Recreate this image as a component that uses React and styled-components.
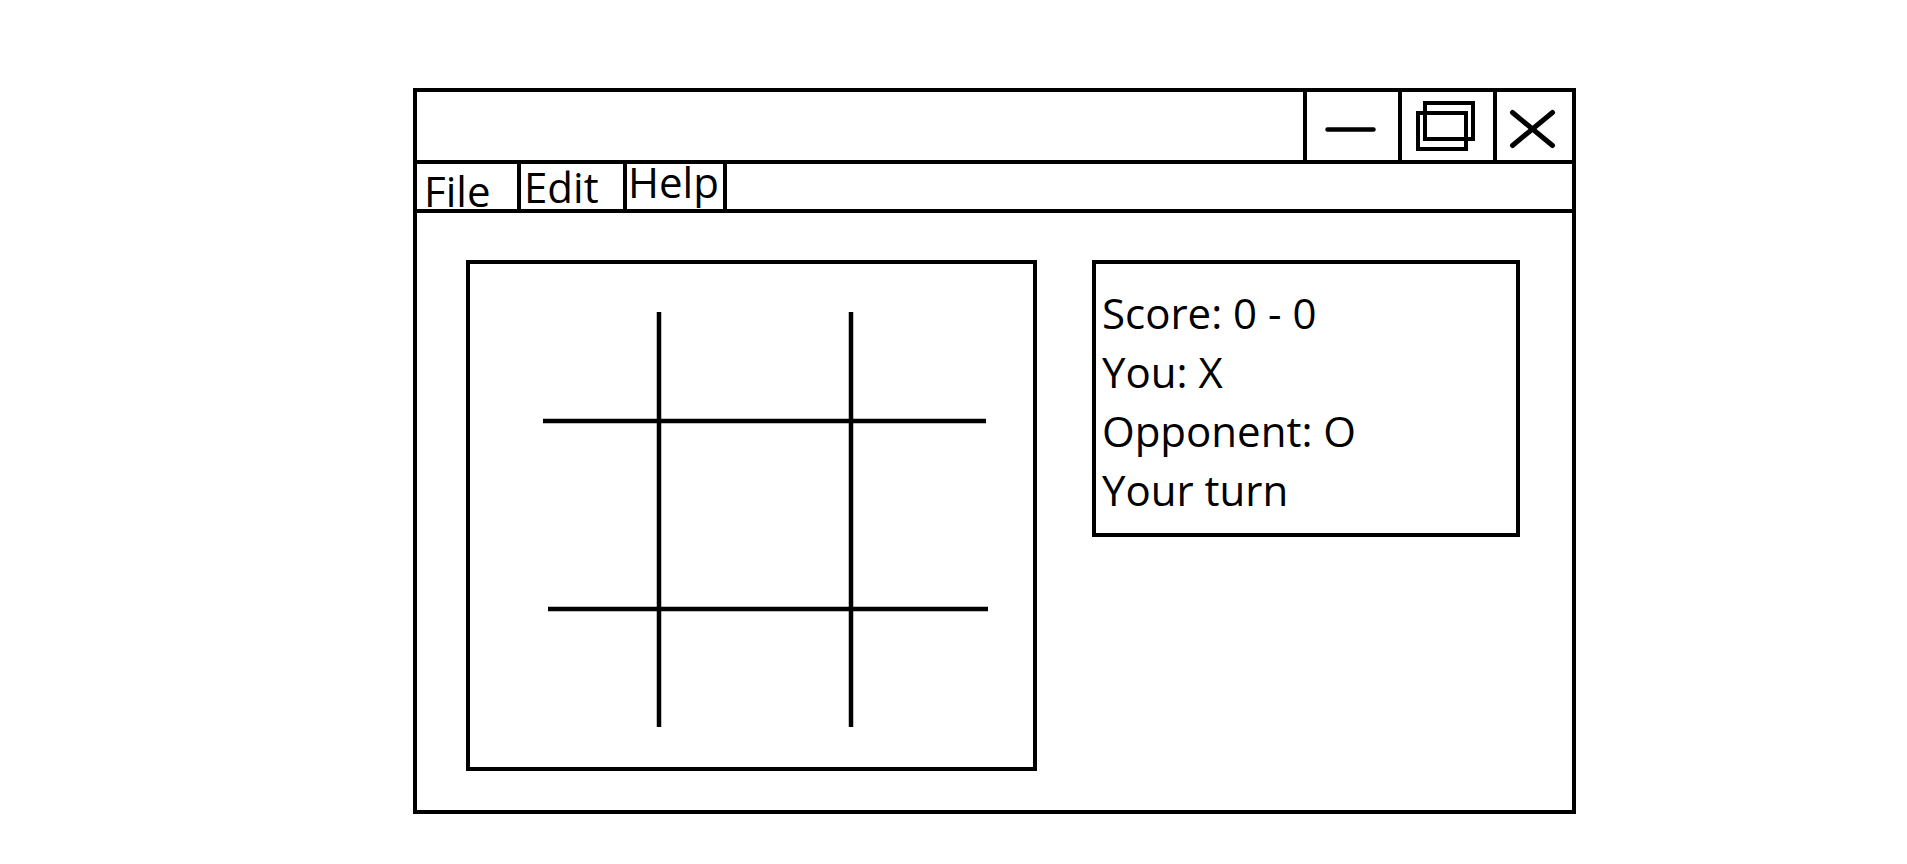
import React from "react";
import styled, { createGlobalStyle } from "styled-components";

const Global = createGlobalStyle`
  html, body { margin: 0; padding: 0; background: #fff; }
  body { font-family: "Open Sans", "Noto Sans", sans-serif; color: #000; }
`;

const Page = styled.div`
  padding: 88px 0 0 413px;
  min-height: 864px;
  box-sizing: border-box;
`;

const Window = styled.div`
  width: 1163px;
  height: 726px;
  border: 4px solid #000;
  box-sizing: border-box;
  display: flex;
  flex-direction: column;
  background: #fff;
`;

const TitleBar = styled.div`
  height: 72px;
  border-bottom: 4px solid #000;
  box-sizing: border-box;
  display: flex;
`;

const TitleSpace = styled.div`
  flex: 1;
`;

const TitleButton = styled.div`
  width: ${(p) => p.$w}px;
  flex: none;
  box-sizing: border-box;
  border-left: 4px solid #000;
  display: flex;
  align-items: stretch;
  svg { display: block; }
`;

const MenuBar = styled.div`
  height: 49px;
  border-bottom: 4px solid #000;
  box-sizing: border-box;
  display: flex;
`;

const MenuItem = styled.div`
  width: ${(p) => p.$w}px;
  border-right: 4px solid #000;
  font-size: 42px;
  font-weight: 500;
  line-height: 36px;
  padding: ${(p) => p.$top}px 0 0 ${(p) => p.$left}px;
  box-sizing: content-box;
  white-space: nowrap;
  overflow: visible;
`;

const Content = styled.div`
  flex: 1;
  display: flex;
  align-items: flex-start;
  padding: 47px 0 0 49px;
  gap: 55px;
`;

const Board = styled.div`
  width: 571px;
  height: 511px;
  border: 4px solid #000;
  box-sizing: border-box;
  svg { display: block; }
`;

const InfoBox = styled.div`
  width: 428px;
  height: 277px;
  border: 4px solid #000;
  box-sizing: border-box;
  padding: 19px 0 0 6px;
  display: flex;
  flex-direction: column;
`;

const InfoLine = styled.div`
  font-size: 42px;
  font-weight: 500;
  line-height: 59px;
  white-space: nowrap;
`;

const Minimize = () => (
  <svg width="91" height="68" viewBox="0 0 91 68">
    <line x1="20.5" y1="37.5" x2="66.5" y2="37.5" stroke="#000" strokeWidth="4.5" strokeLinecap="round" />
  </svg>
);

const Restore = () => (
  <svg width="91" height="68" viewBox="0 0 91 68">
    <rect x="23" y="11" width="48" height="36" fill="none" stroke="#000" strokeWidth="4" />
    <rect x="16" y="21" width="48" height="36" fill="none" stroke="#000" strokeWidth="4" />
  </svg>
);

const Close = () => (
  <svg width="75" height="68" viewBox="0 0 75 68">
    <g stroke="#000" strokeWidth="5" strokeLinecap="round">
      <line x1="15.5" y1="20.5" x2="55.5" y2="53.5" />
      <line x1="55.5" y1="20.5" x2="15.5" y2="53.5" />
    </g>
  </svg>
);

const Grid = () => (
  <svg width="563" height="503" viewBox="0 0 563 503">
    <g stroke="#000" strokeWidth="4.5">
      <line x1="189" y1="48" x2="189" y2="463" />
      <line x1="381" y1="48" x2="381" y2="463" />
      <line x1="73" y1="157" x2="516" y2="157" />
      <line x1="78" y1="345" x2="518" y2="345" />
    </g>
  </svg>
);

export default function App() {
  return (
    <>
      <Global />
      <Page>
        <Window>
          <TitleBar>
            <TitleSpace />
            <TitleButton $w={95}><Minimize /></TitleButton>
            <TitleButton $w={95}><Restore /></TitleButton>
            <TitleButton $w={79}><Close /></TitleButton>
          </TitleBar>
          <MenuBar>
            <MenuItem $w={93} $left={7} $top={9}>File</MenuItem>
            <MenuItem $w={99} $left={3} $top={5}>Edit</MenuItem>
            <MenuItem $w={95} $left={1} $top={0}>Help</MenuItem>
          </MenuBar>
          <Content>
            <Board><Grid /></Board>
            <InfoBox>
              <InfoLine>Score: 0 - 0</InfoLine>
              <InfoLine>You: X</InfoLine>
              <InfoLine>Opponent: O</InfoLine>
              <InfoLine>Your turn</InfoLine>
            </InfoBox>
          </Content>
        </Window>
      </Page>
    </>
  );
}
